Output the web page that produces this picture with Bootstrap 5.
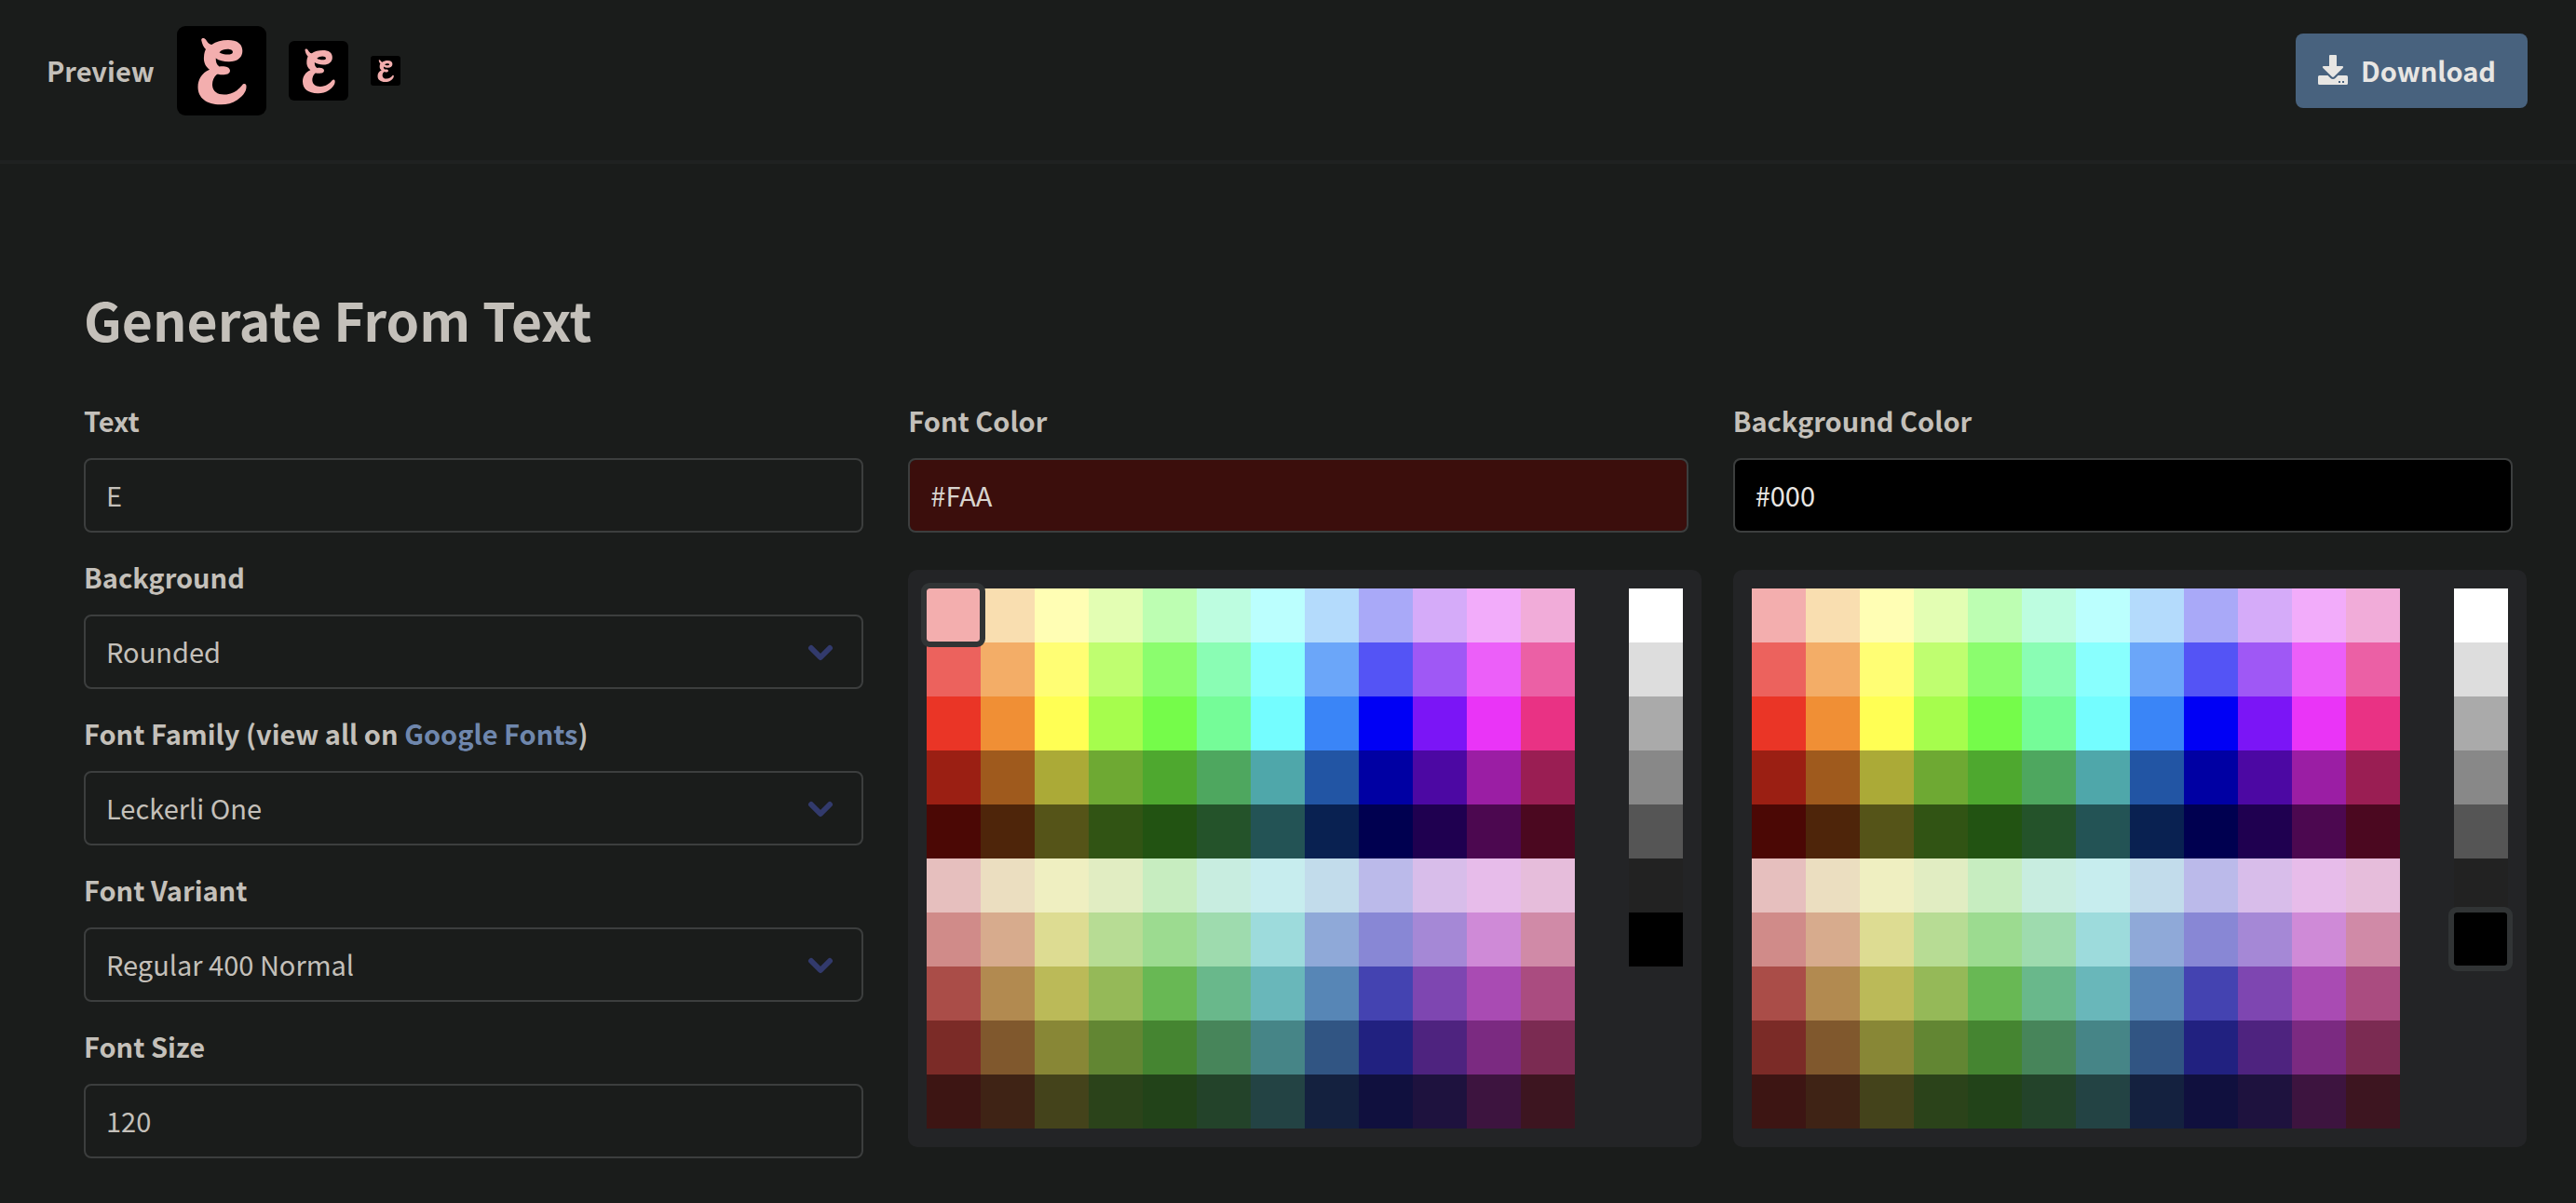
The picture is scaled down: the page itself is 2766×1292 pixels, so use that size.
<!DOCTYPE html>
<html lang="en">
<head>
<meta charset="utf-8">
<meta name="viewport" content="width=device-width, initial-scale=1">
<title>Favicon Generator</title>
<link href="https://cdn.jsdelivr.net/npm/bootstrap@5.3.0/dist/css/bootstrap.min.css" rel="stylesheet">
<style>
  body { background: #1a1c1b; color: #c4c0ba; font-family: "Noto Sans CJK SC", sans-serif; font-size: 29px; line-height: 46px; }
  .topbar { padding: 28px 52px 48px 50px; border-bottom: 4px solid #1f2121; }
  .previews { gap: 24px; }
  .preview-label { padding-bottom: 2px; }
  .btn-download { height: 80px; padding: 0 34px 2px 24px; gap: 14px; border: 0; border-radius: 8px; background: #48627e; color: #e8e6e3; font-size: 29px; line-height: 46px; }
  .btn-download:hover { background: #526f8e; color: #e8e6e3; }
  .generator { padding: 126px 68px 48px 90px; }
  .generator h1 { font-size: 57px; line-height: 80px; margin: 0 0 46px; }
  .field-label { display: block; font-weight: 700; margin: 0 0 18px; }
  .field + .field { margin-top: 24px; }
  .field .form-control, .field .form-select { height: 80px; padding: 0 22px 2px; border: 2px solid #3c3e3e; border-radius: 8px; background-color: transparent; color: #c4c0ba; font-size: 29px; line-height: 46px; }
  .field .form-select { background-image: none; }
  .chevron { position: absolute; right: 32px; top: 31px; pointer-events: none; }
  .field .font-hex { background-color: #3b0e0c; color: #d8d4cf; }
  .field .back-hex { background-color: #000; color: #e8e6e3; }
  .generator a { color: #6f87ad; text-decoration: none; }
  .palette { display: inline-flex; gap: 58px; margin-top: 40px; padding: 20px; border-radius: 10px; background: #232426; vertical-align: top; }
  .swatches { display: grid; grid-template-columns: repeat(12, 58px); grid-auto-rows: 58px; align-content: start; }
  .swatches.greys { grid-template-columns: 58px; }
  .swatch { border: 0; padding: 0; border-radius: 0; }
  .swatch.picked { position: relative; z-index: 1; margin: 0 1px 1px 0; border-radius: 3px; outline: 6px solid #313435; }
</style>
<script src="https://cdn.jsdelivr.net/npm/bootstrap@5.3.0/dist/js/bootstrap.bundle.min.js"></script>
</head>
<body>
<svg class="d-none">
  <symbol id="favicon" viewBox="0 0 96 96">
    <rect width="96" height="96" rx="9" fill="#000"/>
    <path fill="#f3aeae" fill-rule="evenodd" d="M26.300 15.500C25.500 12.500 29.500 12 31 14.500C32.500 16.800 34 19.500 37.200 20C42 16.500 48 15 55 15C64.500 15 70.500 19 70.300 27C70 34.500 64 38.500 55.500 38.300C50 38.200 45 37 41.700 34.500C41.700 38.500 42.500 41.500 45.500 43.500C49 42.700 56.800 43 57 47.800C57 52 52 52.300 48 52.200C46 52.200 44.500 51.500 43 51.700C39.500 54.500 37.800 59 38 63.500C38.500 70.500 44 73.700 51 73.500C60 73.300 66 68.500 70 63.500C71.500 61.500 74.300 61.500 74.500 64.500C75 70.500 70 76 64.500 79.500C59 83 53 84.500 46.500 84.300C32 84 22.600 77.500 22.500 65.500C22.500 57.500 26.500 50.500 35 46.800C30 43 28.500 38 29 33C29.200 29.500 29.800 27 31 25C28.500 22.500 27 19 26.300 15.500ZM45.500 28.200C49 30.700 59.500 32 60 28C60 24 50 23.500 45.500 28.200Z"/>
  </symbol>
  <symbol id="chevron" viewBox="0 0 28 20">
    <path d="M4 5l10 10L24 5" fill="none" stroke="#323a6c" stroke-width="6" stroke-linecap="round" stroke-linejoin="round"/>
  </symbol>
</svg>

<header class="topbar d-flex justify-content-between align-items-center">
  <div class="previews d-flex align-items-center">
    <span class="preview-label fw-bold">Preview</span>
    <svg width="96" height="96" role="img" aria-label="Large icon"><use href="#favicon"/></svg>
    <svg width="64" height="64" role="img" aria-label="Medium icon"><use href="#favicon"/></svg>
    <svg width="32" height="32" role="img" aria-label="Small icon"><use href="#favicon"/></svg>
  </div>
  <button type="button" class="btn btn-download d-flex align-items-center fw-bold">
    <svg width="32" height="32" viewBox="0 0 32 32" fill="currentColor" aria-hidden="true">
      <path d="M13 0h6a1 1 0 0 1 1 1v11h6c1.200 0 1.500 1.200.700 2L17 23.500a1.500 1.500 0 0 1-2 0L5.300 14c-.8-.8-.5-2 .700-2h6V1a1 1 0 0 1 1-1z"/>
      <path fill-rule="evenodd" d="M1.500 22h9l3 3c1.400 1.400 3.600 1.400 5 0l3-3h9A1.500 1.500 0 0 1 32 23.500v7a1.500 1.500 0 0 1-1.500 1.500h-29A1.500 1.500 0 0 1 0 30.500v-7A1.500 1.500 0 0 1 1.500 22zM22 28v2h2v-2zM26 28v2h2v-2z"/>
    </svg>
    Download
  </button>
</header>

<main class="generator">
  <h1 class="fw-bold">Generate From Text</h1>
  <form class="row gx-5 row-cols-3">
    <div class="col">
      <div class="field">
        <label class="field-label" for="text">Text</label>
        <input class="form-control" id="text" type="text" value="E">
      </div>
      <div class="field">
        <label class="field-label" for="shape">Background</label>
        <div class="position-relative">
          <select class="form-select" id="shape"><option>Rounded</option></select>
          <svg class="chevron" width="28" height="20" aria-hidden="true"><use href="#chevron"/></svg>
        </div>
      </div>
      <div class="field">
        <label class="field-label" for="family">Font Family (view all on <a href="#fonts">Google Fonts</a>)</label>
        <div class="position-relative">
          <select class="form-select" id="family"><option>Leckerli One</option></select>
          <svg class="chevron" width="28" height="20" aria-hidden="true"><use href="#chevron"/></svg>
        </div>
      </div>
      <div class="field">
        <label class="field-label" for="variant">Font Variant</label>
        <div class="position-relative">
          <select class="form-select" id="variant"><option>Regular 400 Normal</option></select>
          <svg class="chevron" width="28" height="20" aria-hidden="true"><use href="#chevron"/></svg>
        </div>
      </div>
      <div class="field">
        <label class="field-label" for="size">Font Size</label>
        <input class="form-control" id="size" type="text" inputmode="numeric" value="120">
      </div>
    </div>
    <div class="col">
      <div class="field">
        <label class="field-label" for="fontColor">Font Color</label>
        <input class="form-control font-hex" id="fontColor" type="text" value="#FAA">
      </div>
      <div class="palette" data-picked="f3aeae"></div>
    </div>
    <div class="col">
      <div class="field">
        <label class="field-label" for="backColor">Background Color</label>
        <input class="form-control back-hex" id="backColor" type="text" value="#000">
      </div>
      <div class="palette" data-picked="000000"></div>
    </div>
  </form>
</main>

<script>
  const hues = [
    'f3aeae f9deb0 fffeb4 e3feb3 bdfeb2 bdfde0 bbfffe b4dbfc a9a9f8 d5abf9 f2acfa f1acd9',
    'ec625d f3ad67 fffe74 bffe70 8bfd6e 8afdb4 89fffe 6ba6f9 5454f5 9f58f5 ec5ff9 eb60a5',
    'ea3526 f08f35 ffff54 a6fd4d 75fc4a 75fc98 74fdff 3a85f7 0000f5 7b15f6 ea34f7 e93284',
    '9b1f13 9f5a1d abaa37 6ea933 4ea82f 4ea75f 4fa7aa 2255a4 0000a3 4c08a3 9b1ea4 9a1e53',
    '4b0805 4e250a 555418 315414 225312 24532a 235355 092151 000050 1f0050 4c0850 4b0820',
    'e6bfbe ebdec0 efefc1 e1edc2 c7edc0 c8ede0 c7edee c2dceb bbbaea d8bdea e7bcea e6bddb',
    'd08b89 d7ab8d dddc92 b7dc94 9cdb90 9edbae 9ddbdc 8fa9d8 8887d5 a588d6 cf8ad7 d08aa7',
    'aa4d48 b28a50 bbba58 95b958 68b854 69b88b 69b7ba 5786b6 4443b1 7e46b1 a94bb3 aa4c80',
    '7b2b27 80582d 888736 628633 458531 47855a 468587 315583 212180 4e237f 7b2a81 7b2b52',
    '3d1513 3f2315 44431b 2b431a 224319 23432a 234344 14213f 10103e 1e123e 3d143f 3d1520'
  ];
  const greys = ['ffffff', 'dddddd', 'aaaaaa', '888888', '555555', '222222', '000000'];

  function fill(list, colours, picked) {
    for (const colour of colours) {
      const b = document.createElement('button');
      b.type = 'button';
      b.className = 'swatch' + (colour === picked ? ' picked' : '');
      b.style.backgroundColor = '#' + colour;
      b.setAttribute('aria-label', '#' + colour);
      list.append(b);
    }
  }
  for (const palette of document.querySelectorAll('.palette')) {
    const main = document.createElement('div');
    const side = document.createElement('div');
    main.className = 'swatches';
    side.className = 'swatches greys';
    fill(main, hues.join(' ').split(' '), palette.dataset.picked);
    fill(side, greys, palette.dataset.picked);
    palette.append(main, side);
  }
</script>
</body>
</html>
